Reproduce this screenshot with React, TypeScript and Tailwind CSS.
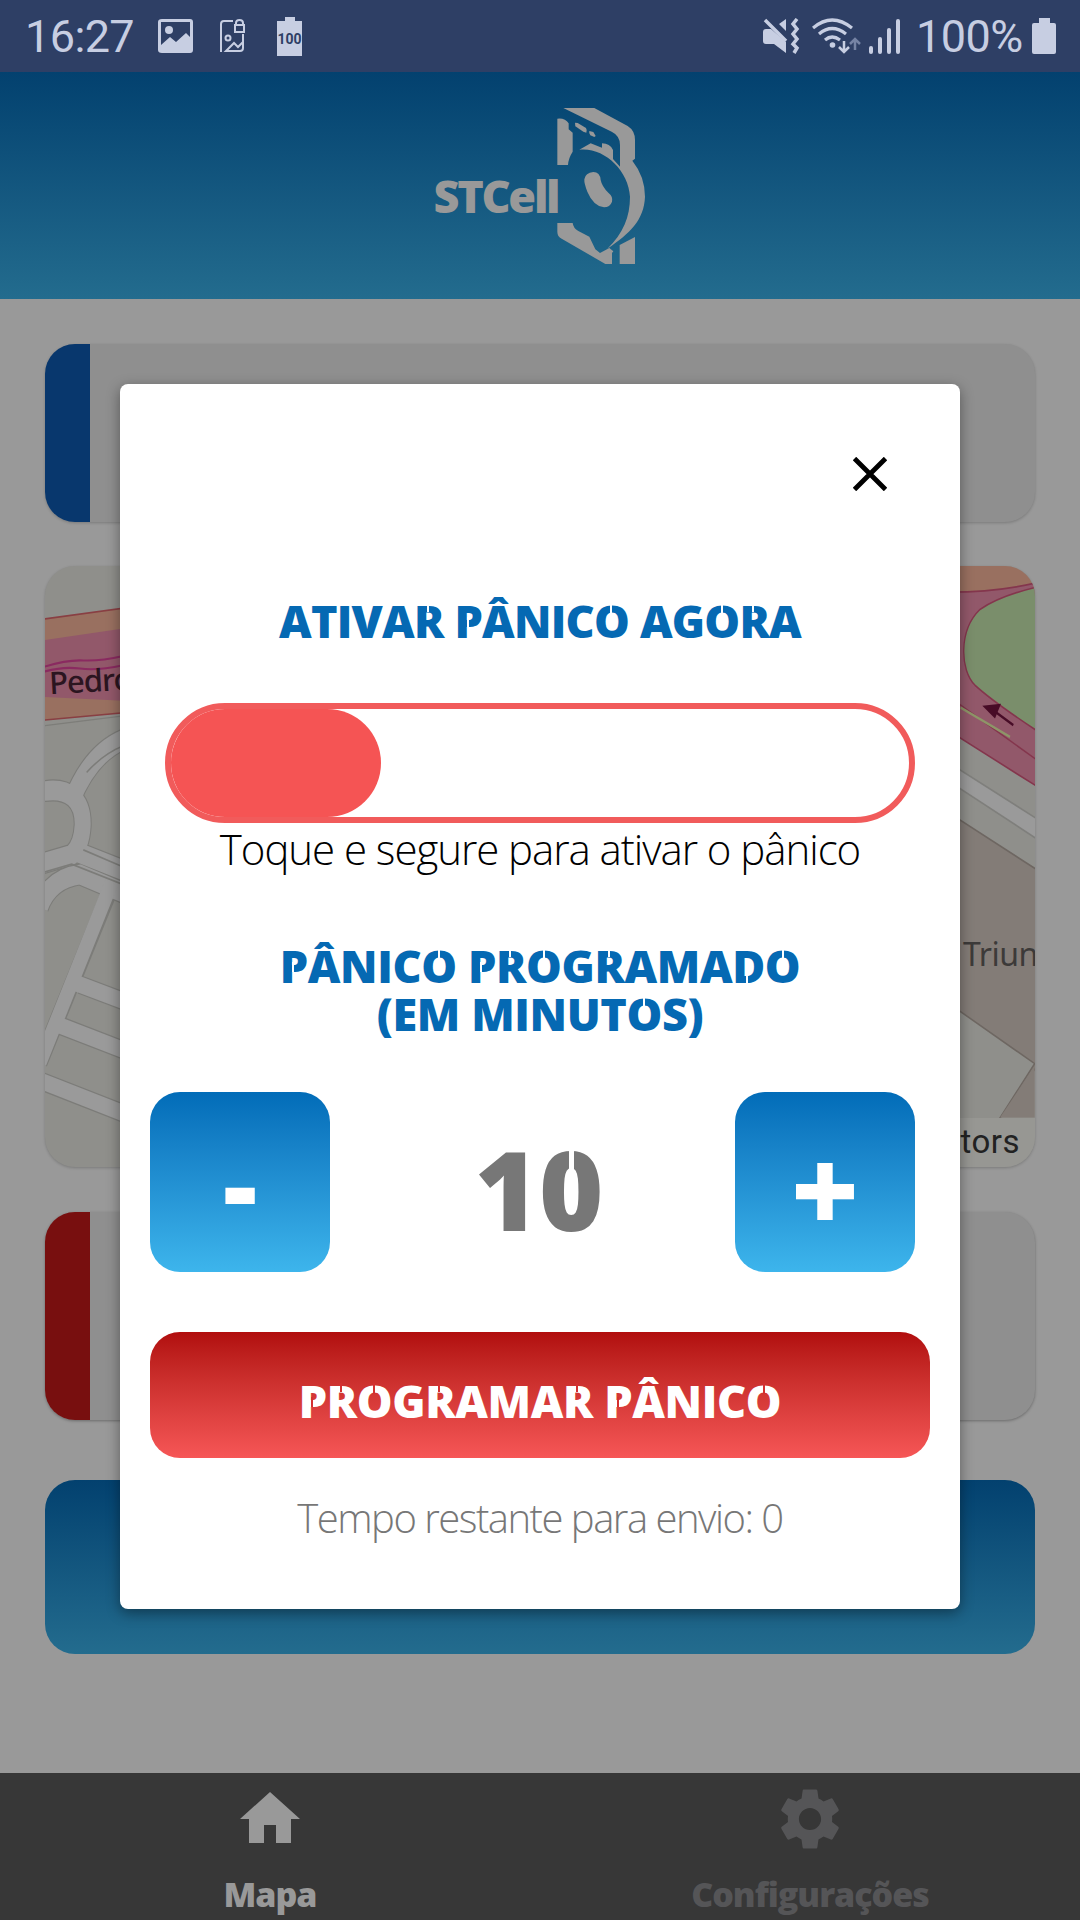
import { MdHome, MdSettings } from "react-icons/md";

// Letras con corte tipo esténcil
const GAPS: Record<string, string> = {
  O: "left-[47%] top-[0.135em] h-[0.24em]",
  "0": "left-[47%] top-[0.19em] h-[0.28em]",
  R: "left-[44%] top-[0.135em] h-[0.2em]",
  P: "left-[44%] top-[0.455em] h-[0.22em]",
  D: "left-[42%] bottom-[0.115em] h-[0.2em]",
};

function Stencil({ text, gap }: { text: string; gap: string }) {
  return (
    <>
      {text.split("").map((c, i) =>
        GAPS[c] ? (
          <span key={i} className="relative inline-block">
            {c}
            <i className={`absolute w-[0.045em] ${GAPS[c]} ${gap}`} />
          </span>
        ) : (
          c
        )
      )}
    </>
  );
}

function StatusBar() {
  return (
    <div className="h-[72px] bg-[#2e3f65] text-[#c7cee2] flex items-center justify-between pl-[25px] pr-[24px]">
      <div className="flex items-center">
        <span className="w-[132px] font-['Roboto'] text-[45px] leading-none tracking-[-0.6px]">16:27</span>
        <svg width="36" height="34" viewBox="0 0 36 34" className="ml-[1px]">
          <path fill="currentColor" fillRule="evenodd" d="M4 0h28q3 0 3 3v28q0 3-3 3H4q-4 0-4-3V3q0-3 4-3zM3 3v23l9-8 6 5 10-9 4 4V3z" />
          <circle cx="11" cy="11" r="4" fill="currentColor" />
        </svg>
        <svg width="26" height="34" viewBox="0 0 26 34" className="ml-[26px]" fill="none" stroke="currentColor" strokeWidth="2">
          <path d="M13 2H4Q1 2 1 5v28M23 15v14q0 3-3 3H6l8-8 4 4 5-5" />
          <circle cx="8" cy="19" r="2.5" />
          <rect x="15" y="6" width="9" height="7" />
          <path d="M16 6V4q0-3 3.500-3t3.500 3v2" />
        </svg>
        <div className="ml-[31px] flex flex-col items-center">
          <div className="h-[4px] w-[10px] bg-current" />
          <div className="h-[35px] w-[25px] bg-[#c7cee2] text-center font-['Roboto'] text-[14px] font-bold leading-[36px] text-[#2e3f65]">
            100
          </div>
        </div>
      </div>
      <div className="flex items-center">
        <svg width="37" height="36" viewBox="0 0 37 36">
          <path fill="currentColor" d="M0 14q0-3 3-3h5l15 13v11L11 26H3q-3 0-3-3zM23 1v12l-7-7z" />
          <path fill="none" stroke="currentColor" strokeWidth="3.500" d="M2 2l21 21M34 1l-4 5 4 5-4 5 4 5-4 5 4 4-3 5" />
        </svg>
        <svg width="50" height="36" viewBox="0 0 50 36" className="ml-[12px]" fill="none" stroke="currentColor" strokeWidth="3.200">
          <path d="M1 10Q20-6 40 10M7 16q13-11 27 0M13 22q7-6 15 0" />
          <circle cx="20.500" cy="27" r="2.800" fill="currentColor" stroke="none" />
          <path strokeWidth="2.500" d="M32 23v11M27 29l5 5 5-5" />
          <path strokeWidth="2.500" stroke="#7583a4" d="M43 32V21M38 26l5-5 5 5" />
        </svg>
        <div className="ml-[7px] flex h-[35px] items-end gap-[5px]">
          <div className="h-[8px] w-[4px] rounded-full bg-current" />
          <div className="h-[17px] w-[4px] rounded-full bg-current" />
          <div className="h-[26px] w-[4px] rounded-full bg-current" />
          <div className="h-[35px] w-[4px] rounded-full bg-current" />
        </div>
        <span className="ml-[16px] w-[106px] font-['Roboto'] text-[45px] leading-none tracking-[-0.5px]">100%</span>
        <div className="ml-[10px] flex flex-col items-center">
          <div className="h-[5px] w-[11px] bg-current" />
          <div className="h-[31px] w-[24px] rounded-[2px] bg-current" />
        </div>
      </div>
    </div>
  );
}

function Logo() {
  return (
    <div className="flex h-[227px] items-start justify-center bg-gradient-to-b from-[#03416f] to-[#236c8e] pr-[2px] pt-[36px] text-[#999]">
      <span className="mt-[62px] w-[123px] whitespace-nowrap font-['Open_Sans'] text-[45px] font-extrabold leading-[52px] tracking-[-2.3px]">
        STCell
      </span>
      <svg width="88" height="156" viewBox="471 84 264 468" fill="currentColor">
        <path d="M490 84H583L683 138Q705 152 705 180V236L697 242Q735 290 735 350C732 420 690 460 622 506C670 460 690 410 690 350C686 270 610 200 538 209L572 190L600 201L606 203V190Q630 190 639 210V237L660 260V195Q660 167 635 155Z" />
        <path d="M472 116Q495 113 506 130V148L518 158V215Q505 235 504 255H472Z" />
        <path d="M525 128L533 129L558 144Q562 150 559 158L550 155L526 139Z" />
        <path d="M568 153L580 156L587 168L583 171L571 166Q566 160 568 153Z" />
        <path d="M580 276Q600 276 602 300Q606 320 625 338Q640 350 636 365Q630 382 612 382Q580 378 562 335Q552 310 553 298Q556 278 580 276Z" />
        <path d="M472 429H518Q520 445 535 453L568 470L586 508L600 519L628 504L640 514L636 519V552H616L485 476Q472 470 472 455Z" />
        <path d="M659 495L705 471V552H659Z" />
      </svg>
    </div>
  );
}

function MapCard() {
  return (
    <div className="relative mt-[44px] h-[601px] overflow-hidden rounded-[30px] bg-[#8f8f8b] shadow-[0_1px_3px_rgba(0,0,0,0.2)]">
      <svg width="990" height="601" viewBox="0 0 990 601" className="block">
        <g transform="translate(-45 -6) scale(.3333 .4083)" fill="none">
          <path fill="#997060" stroke="#893f43" strokeWidth="4" d="M120 146L370 118V374L120 393Z" />
          <path fill="#92586a" d="M120 198L370 168V345L120 335Z" />
          <path stroke="#8a2a60" strokeWidth="5" d="M130 262Q200 244 250 246T370 235M130 274Q190 260 240 266T370 258" />
          <path stroke="#7d7d79" strokeWidth="3" d="M130 406L370 382" />
          <g stroke="#7c7c79">
            <path strokeWidth="54" d="M370 440Q270 475 215 590M120 568C210 552 250 590 248 650Q245 700 215 722L120 745M215 710L370 760M120 850Q150 780 240 770L370 815" />
            <path strokeWidth="46" d="M335 800L120 1230M240 1040L370 1080M180 1140L370 1200M120 1275L370 1355" />
          </g>
          <g stroke="#9a9a9a">
            <path strokeWidth="48" d="M370 440Q270 475 215 590M120 568C210 552 250 590 248 650Q245 700 215 722L120 745M215 710L370 760M120 850Q150 780 240 770L370 815" />
            <path strokeWidth="40" d="M335 790L120 1230M230 1037L370 1080M170 1137L370 1200M120 1275L370 1355" />
          </g>
          <path stroke="#7c7c79" strokeWidth="4" d="M250 710L370 752M130 765L215 745L370 795M260 520Q310 475 370 455" />
        </g>
        <g transform="translate(855 -26) scale(.3333 .4209)" strokeWidth="4">
          <path fill="#997060" d="M150 50H420V115L150 130Z" />
          <path fill="#92586a" stroke="#84364d" d="M150 124Q290 124 420 100V590L150 455Z" />
          <path fill="#7a8e6b" stroke="#84364d" d="M420 110Q300 132 240 165C175 215 180 310 225 345Q280 385 420 458Z" />
          <path fill="none" stroke="#84364d" d="M150 374L420 528" />
          <path fill="none" stroke="#8e9568" d="M182 398L330 468" strokeWidth="6" />
          <path fill="none" stroke="#480c27" strokeWidth="6" d="M275 402L340 440" />
          <path fill="#480c27" d="M247 394L303 389L285 424Z" />
          <path fill="#9a9a9a" stroke="#7f7f7c" d="M150 531L420 667V715L150 575Z" />
          <path fill="#837c77" stroke="#6e6762" d="M150 650L420 788V1240L300 1373H150Z" />
          <path fill="#8f8f8b" stroke="#6e6762" d="M150 1103L404 1244L270 1410L150 1420Z" />
          <path fill="#837c77" d="M404 1250V1372H300Z" />
          <path fill="#979793" d="M150 1373H420V1500H150Z" />
        </g>
      </svg>
      <span className="absolute left-[4px] top-[94px] -rotate-3 font-['Noto_Sans'] text-[31px] font-medium leading-[40px] tracking-[-1px] text-[#2b1520]">Pedro</span>
      <span className="absolute left-[918px] top-[366px] font-['Noto_Sans'] text-[32px] leading-[44px] tracking-[-0.5px] text-[#3c3a39]">Triun</span>
      <span className="absolute right-[15px] top-[556px] font-['Roboto'] text-[33px] leading-[40px] tracking-[0.5px] text-[#222]">tors</span>
    </div>
  );
}

function PanicModal() {
  const title = "text-center font-['Open_Sans'] text-[45px] font-extrabold leading-[48px] text-[#0569b3]";
  const step = "flex h-[180px] w-[180px] justify-center rounded-[30px] bg-gradient-to-b from-[#026cb8] to-[#3db5ec] font-['Open_Sans'] font-extrabold text-white";
  return (
    <div className="absolute left-[120px] top-[384px] flex h-[1225px] w-[840px] flex-col rounded-[8px] bg-white px-[30px] pt-[73px] shadow-[0_4px_14px_rgba(0,0,0,0.4)]">
      <svg width="34" height="34" viewBox="0 0 34 34" className="mr-[43px] self-end" stroke="#000" strokeWidth="4.800">
        <path d="M1.500 1.500l31 31M32.500 1.500l-31 31" />
      </svg>
      <h2 className={`${title} mt-[106px] tracking-[-0.8px]`}>
        <Stencil text="ATIVAR PÂNICO AGORA" gap="bg-white" />
      </h2>
      <div className="ml-[15px] mt-[58px] h-[120px] w-[750px] shrink-0 rounded-full border-[6px] border-[#f15b5b]">
        <div className="h-full w-[210px] rounded-full bg-[#f55454]" />
      </div>
      <p className="mt-[-3px] whitespace-nowrap text-center font-['Open_Sans'] text-[42px] font-light leading-[58px] tracking-[-1.05px] text-black">
        Toque e segure para ativar o pânico
      </p>
      <h2 className={`${title} mt-[64px] tracking-[-0.4px]`}>
        <Stencil text="PÂNICO PROGRAMADO" gap="bg-white" />
        <br />
        <Stencil text="(EM MINUTOS)" gap="bg-white" />
      </h2>
      <div className="mt-[54px] flex h-[180px] w-[765px] shrink-0 items-start justify-between">
        <button className={`${step} pt-[26px] text-[106px] leading-[130px]`}>-</button>
        <span className="mt-[31px] pl-[13px] font-['Open_Sans'] text-[110px] font-extrabold leading-[130px] text-[#777]">
          <Stencil text="10" gap="bg-white" />
        </span>
        <button className={`${step} pt-[31px] text-[117px] leading-[130px]`}>+</button>
      </div>
      <button className="mt-[60px] h-[126px] shrink-0 rounded-[30px] bg-gradient-to-b from-[#b10d0d] to-[#f65656] pt-[12px] font-['Open_Sans'] text-[45px] font-extrabold leading-[48px] tracking-[-0.4px] text-white">
        <Stencil text="PROGRAMAR PÂNICO" gap="bg-[#d43030]" />
      </button>
      <p className="mt-[30px] whitespace-nowrap text-center font-['Open_Sans'] text-[40px] font-light leading-[60px] tracking-[-1.5px] text-[#777]">
        Tempo restante para envio: 0
      </p>
    </div>
  );
}

export default function App() {
  return (
    <div className="relative h-[1920px] w-[1080px] overflow-hidden bg-[#999]">
      <StatusBar />
      <Logo />
      <div className="flex h-[1474px] flex-col px-[45px] pt-[45px]">
        <div className="h-[178px] overflow-hidden rounded-[30px] bg-[#8f8f8f] shadow-[0_1px_3px_rgba(0,0,0,0.2)]">
          <div className="h-full w-[45px] bg-[#08376d]" />
        </div>
        <MapCard />
        <div className="mt-[45px] h-[208px] overflow-hidden rounded-[30px] bg-[#8f8f8f] shadow-[0_1px_3px_rgba(0,0,0,0.3)]">
          <div className="h-full w-[45px] bg-[#780f0f]" />
        </div>
        <div className="mt-[60px] h-[174px] rounded-[30px] bg-gradient-to-b from-[#03416f] to-[#236c8e]" />
      </div>
      <nav className="grid h-[147px] grid-cols-2 bg-[#373737] font-['Open_Sans'] text-[34px] font-extrabold leading-[46px] tracking-[-1px]">
        <div className="flex flex-col items-center pt-[10px] text-[#999]">
          <MdHome size={72} />
          <span className="mt-[16px]">Mapa</span>
        </div>
        <div className="flex flex-col items-center pt-[9px] text-[#555557]">
          <MdSettings size={74} />
          <span className="mt-[15px]">Configurações</span>
        </div>
      </nav>
      <PanicModal />
    </div>
  );
}
